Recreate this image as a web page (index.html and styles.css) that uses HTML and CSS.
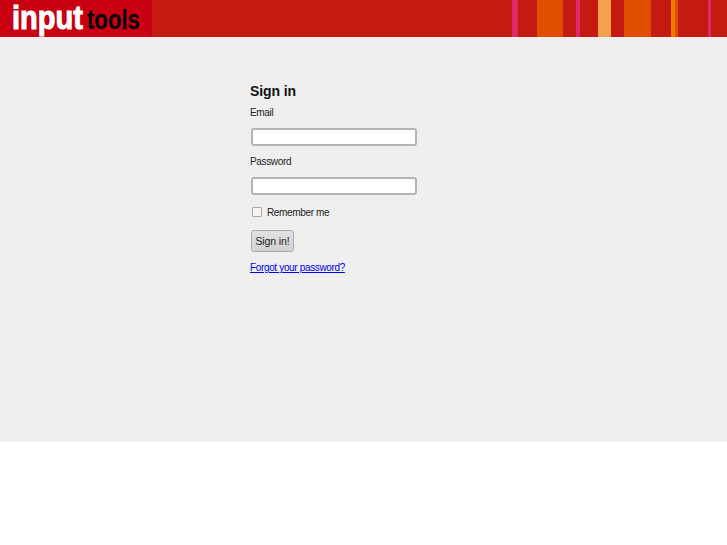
FILE: index.html
```html
<!DOCTYPE html>
<html lang="en">
<head>
    <meta charset="UTF-8">
    <title>Sign in</title>
    <link rel="stylesheet" href="styles.css">
</head>
<body>
    <div class="header">
        <div class="logo"><span class="logo-input">input</span><span class="logo-tools">tools</span></div>
    </div>
    <div class="main">
        <form class="signin">
            <h1>Sign in</h1>
            <div class="field">
                <label for="email">Email</label>
                <input type="text" id="email" name="email">
            </div>
            <div class="field">
                <label for="password">Password</label>
                <input type="password" id="password" name="password">
            </div>
            <div class="remember">
                <input type="checkbox" id="remember" name="remember">
                <label for="remember">Remember me</label>
            </div>
            <button type="button">Sign in!</button>
            <a href="#" class="forgot">Forgot your password?</a>
        </form>
    </div>
</body>
</html>
```

FILE: styles.css
```css
body {
    margin: 0;
    font-family: "Liberation Sans", Arial, sans-serif;
    font-size: 10px;
    letter-spacing: -0.35px;
    color: #222;
    background: white;
}

.header {
    height: 37px;
    background: linear-gradient(to right,
        #c41a12 512px, #df2a6a 512px, #df2a6a 518px,
        #c41a12 518px, #c41a12 537px, #e04e00 537px, #e04e00 563px,
        #c41a12 563px, #c41a12 576px, #df2a6a 576px, #df2a6a 580px,
        #c41a12 580px, #c41a12 598px, #f4a24c 598px, #f4a24c 611px,
        #c41a12 611px, #c41a12 624px, #e04e00 624px, #e04e00 651px,
        #c41a12 651px, #c41a12 671px, #ee7a00 671px, #ee7a00 675px,
        #e04e00 675px, #e04e00 678px, #c41a12 678px, #c41a12 708px,
        #df2a6a 708px, #df2a6a 711px, #c41a12 711px);
}

.logo {
    width: 152px;
    height: 37px;
    box-sizing: border-box;
    padding: 1px 0 0 12px;
    background: #c80012;
    display: flex;
    align-items: baseline;
    overflow: hidden;
    letter-spacing: 0;
}

.logo-input {
    width: 75px;
    font-size: 33px;
    font-weight: bold;
    line-height: 34px;
    color: white;
    -webkit-text-stroke: 1px white;
    transform: scaleX(0.88);
    transform-origin: left;
}

.logo-tools {
    font-size: 27px;
    font-weight: bold;
    line-height: 34px;
    color: black;
    transform: scaleX(0.82);
    transform-origin: left;
}

.main {
    height: 405px;
    background: #efefef;
    padding-left: 250px;
}

.signin {
    width: 170px;
    padding-top: 45px;
}

h1 {
    font-size: 14px;
    letter-spacing: -0.1px;
    line-height: 18px;
    margin: 0 0 6px 0;
    color: #111;
}

.field {
    margin-bottom: 9px;
}

.field label {
    display: block;
    line-height: 13px;
    margin-bottom: 9px;
}

.field input {
    display: block;
    box-sizing: border-box;
    width: 166px;
    height: 18px;
    margin: 0 0 0 1px;
    padding: 1px 3px;
    background: white;
    border: 2px solid #b4b4b4;
    border-radius: 3px;
}

.remember {
    display: flex;
    align-items: center;
    height: 14px;
    margin-top: 10px;
}

.remember input {
    appearance: none;
    box-sizing: border-box;
    width: 10px;
    height: 10px;
    margin: 0 5px 0 2px;
    background: #f6f6f6;
    border: 1px solid #aaa;
    border-radius: 1px;
}

button {
    display: block;
    box-sizing: border-box;
    width: 43px;
    height: 22px;
    margin: 11px 0 0 1px;
    padding: 0;
    font-family: inherit;
    font-size: 10.5px;
    letter-spacing: -0.1px;
    color: #222;
    background: linear-gradient(to bottom, #e2e2e2, #d2d2d2);
    border: 1px solid #aaa;
    border-radius: 3px;
}

.forgot {
    display: block;
    margin-top: 9px;
    line-height: 13px;
    color: #00e;
}
```
